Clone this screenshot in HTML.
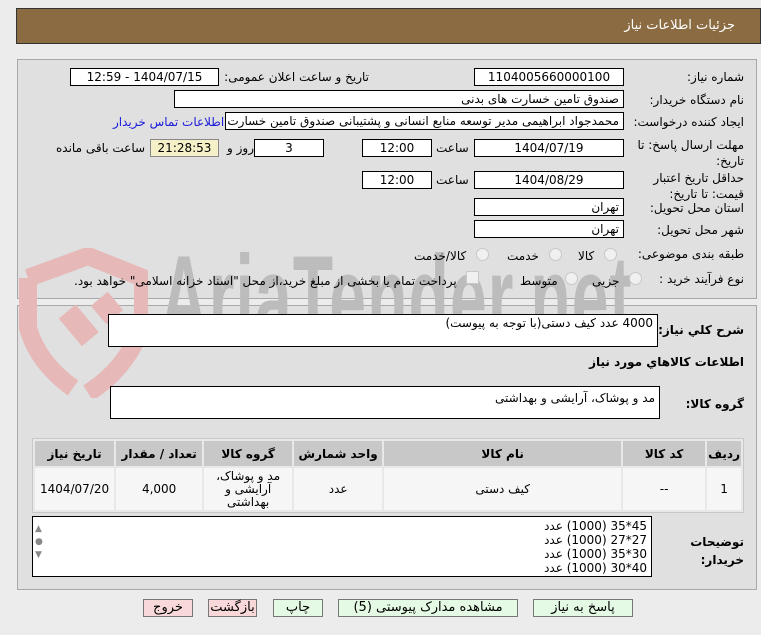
<!DOCTYPE html>
<html><head><meta charset="utf-8"><style>
body{margin:0;width:761px;height:635px;background:#ececec;font-family:Tahoma,"DejaVu Sans","Liberation Sans",sans-serif;font-size:12px;color:#000;position:relative;overflow:hidden}
.a{position:absolute}
.box{position:absolute;background:#fff;border:1px solid #000;box-sizing:border-box;direction:rtl;padding:0 4px;line-height:16px;white-space:nowrap;overflow:hidden}
.c{text-align:center}
.l{position:absolute;direction:rtl;white-space:nowrap}
.panel{position:absolute;left:17px;width:740px;background:#e0e0e0;border:1px solid #a8a8a8;box-sizing:border-box}
.rd{position:absolute;width:11px;height:11px;border-radius:50%;border:1px solid #c8c8c8;background:#f0f0f0}
table{border-collapse:separate;border-spacing:2px;position:absolute;left:32px;top:438px;width:712px;background:#e8e8e8;border:1px solid #c8c8c8;direction:rtl}
th{background:#c8c8c8;height:23px;font-size:12px}
td{background:#f6f6f6;text-align:center;height:40px;font-size:12px}
.btn{position:absolute;top:599px;height:18px;border:1px solid #777;box-sizing:border-box;text-align:center;line-height:16px;font-size:13px}
</style></head><body>
<div class="a" style="left:16px;top:8px;width:745px;height:36px;background:#8b6b42;border:1px solid #333;box-sizing:border-box"></div>
<div class="l" style="right:26px;top:18px;color:#fff;font-size:13px">جزئیات اطلاعات نیاز</div>

<div class="panel" style="top:59px;height:240px"></div>
<div class="panel" style="top:305px;height:285px"></div>

<svg class="a" style="left:18px;top:248px" width="130" height="150" viewBox="0 0 130 150"><path d="M10 30 L70 8 L125 30 L125 75 Q110 120 70 145" fill="none" stroke="#e6b8b8" stroke-width="18"/><path d="M10 30 L10 80 Q20 115 55 140" fill="none" stroke="#e6b8b8" stroke-width="18"/><rect x="50" y="60" width="22" height="36" fill="#e6b8b8" transform="rotate(-40 60 78)"/><rect x="78" y="48" width="22" height="24" fill="#e6b8b8" transform="rotate(-40 89 60)"/></svg>
<div class="a" style="left:160px;top:238px;font-size:120px;color:#bcbcbc;font-weight:bold;font-family:'Liberation Sans',sans-serif;transform:scaleX(0.55);transform-origin:left top;line-height:120px;letter-spacing:2px">AriaTender.net</div>

<div class="l" style="right:17px;top:70px">شماره نیاز:</div>
<div class="box c" style="left:474px;top:68px;width:150px;height:18px">1104005660000100</div>
<div class="l" style="right:392px;top:70px">تاریخ و ساعت اعلان عمومی:</div>
<div class="box c" style="left:70px;top:68px;width:149px;height:18px">1404/07/15 - 12:59</div>

<div class="l" style="right:17px;top:93px">نام دستگاه خریدار:</div>
<div class="box" style="left:174px;top:90px;width:450px;height:18px">صندوق تامین خسارت های بدنی</div>

<div class="l" style="right:17px;top:115px">ایجاد کننده درخواست:</div>
<div class="box" style="left:225px;top:112px;width:399px;height:18px">محمدجواد ابراهیمی مدیر توسعه منابع انسانی و پشتیبانی صندوق تامین خسارت های بدنی</div>
<div class="l" style="left:113px;top:115px;color:#1a1adb">اطلاعات تماس خریدار</div>

<div class="l" style="right:17px;top:137px;line-height:16px;text-align:right">مهلت ارسال پاسخ: تا<br>تاریخ:</div>
<div class="box c" style="left:474px;top:139px;width:150px;height:18px">1404/07/19</div>
<div class="l" style="left:436px;top:141px">ساعت</div>
<div class="box c" style="left:362px;top:139px;width:70px;height:18px">12:00</div>
<div class="box c" style="left:254px;top:139px;width:70px;height:18px">3</div>
<div class="l" style="left:227px;top:141px">روز و</div>
<div class="box c" style="left:150px;top:139px;width:69px;height:18px;background:#f5f0c8;border-color:#888">21:28:53</div>
<div class="l" style="left:56px;top:141px">ساعت باقی مانده</div>

<div class="l" style="right:17px;top:170px;line-height:16px;text-align:right">حداقل تاریخ اعتبار<br>قیمت: تا تاریخ:</div>
<div class="box c" style="left:474px;top:171px;width:150px;height:18px">1404/08/29</div>
<div class="l" style="left:436px;top:173px">ساعت</div>
<div class="box c" style="left:362px;top:171px;width:70px;height:18px">12:00</div>

<div class="l" style="right:17px;top:201px">استان محل تحویل:</div>
<div class="box" style="left:474px;top:198px;width:150px;height:18px">تهران</div>
<div class="l" style="right:17px;top:223px">شهر محل تحویل:</div>
<div class="box" style="left:474px;top:220px;width:150px;height:18px">تهران</div>

<div class="l" style="right:17px;top:247px">طبقه بندی موضوعی:</div>
<div class="rd" style="left:604px;top:248px"></div><div class="l" style="left:578px;top:249px">کالا</div>
<div class="rd" style="left:549px;top:248px"></div><div class="l" style="left:507px;top:249px">خدمت</div>
<div class="rd" style="left:476px;top:248px"></div><div class="l" style="left:414px;top:249px">کالا/خدمت</div>

<div class="l" style="right:17px;top:272px">نوع فرآیند خرید :</div>
<div class="rd" style="left:629px;top:272px"></div><div class="l" style="left:592px;top:274px">جزیی</div>
<div class="rd" style="left:565px;top:272px"></div><div class="l" style="left:520px;top:274px">متوسط</div>
<div class="a" style="left:466px;top:271px;width:11px;height:11px;border:1px solid #c8c8c8;background:#f0f0f0"></div>
<div class="l" style="left:74px;top:274px">پرداخت تمام یا بخشی از مبلغ خرید،از محل "اسناد خزانه اسلامی" خواهد بود.</div>

<div class="l" style="right:17px;top:323px;font-weight:bold">شرح کلي نياز:</div>
<div class="box" style="left:108px;top:314px;width:550px;height:33px">4000 عدد کیف دستی(با توجه به پیوست)</div>
<div class="l" style="right:17px;top:355px;font-weight:bold">اطلاعات کالاهاي مورد نياز</div>
<div class="l" style="right:17px;top:397px;font-weight:bold">گروه کالا:</div>
<div class="box" style="left:110px;top:386px;width:550px;height:33px;padding-top:3px">مد و پوشاک، آرایشی و بهداشتی</div>

<table><tr><th style="width:26px">ردیف</th><th style="width:80px">کد کالا</th><th style="width:235px">نام کالا</th><th style="width:86px">واحد شمارش</th><th style="width:86px">گروه کالا</th><th style="width:84px">تعداد / مقدار</th><th>تاریخ نیاز</th></tr>
<tr><td>1</td><td>--</td><td>کیف دستی</td><td>عدد</td><td style="line-height:13px">مد و پوشاک، آرایشی و بهداشتی</td><td>4,000</td><td>1404/07/20</td></tr></table>

<div class="l" style="right:17px;top:533px;font-weight:bold;line-height:18px;text-align:right">توضیحات<br>خریدار:</div>
<div class="box" style="left:32px;top:516px;width:620px;height:61px;line-height:14px;padding-top:2px">45*35 (1000) عدد<br>27*27 (1000) عدد<br>30*35 (1000) عدد<br>40*30 (1000) عدد</div>
<div class="a" style="left:35px;top:523px;font-size:9px;color:#888;line-height:13px">▲<br>●<br>▼</div>

<div class="btn" style="left:143px;width:50px;background:#f8d8d8">خروج</div>
<div class="btn" style="left:208px;width:49px;background:#f8d8d8">بازگشت</div>
<div class="btn" style="left:273px;width:50px;background:#e4fae4">چاپ</div>
<div class="btn" style="left:338px;width:180px;background:#e4fae4">مشاهده مدارک پیوستی (5)</div>
<div class="btn" style="left:533px;width:100px;background:#e4fae4">پاسخ به نیاز</div>
</body></html>
